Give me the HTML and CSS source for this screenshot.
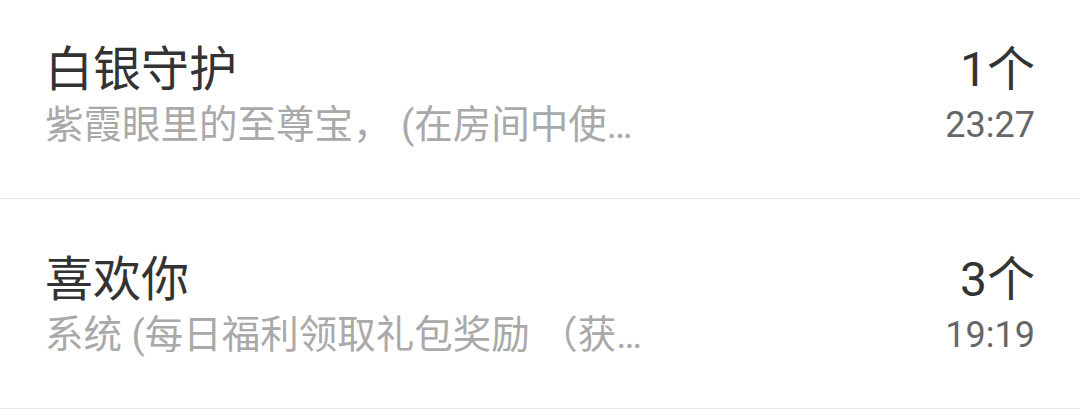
FILE: index.html
```html
<!DOCTYPE html>
<html lang="zh-CN">
<head>
<meta charset="utf-8">
<link rel="stylesheet" href="styles.css">
</head>
<body>
<div class="list">
  <div class="row">
    <div class="title">白银守护</div>
    <div class="count">1个</div>
    <div class="sub">紫霞眼里的至尊宝， (在房间中使用后获得白银守护特权)</div>
    <div class="time">23:27</div>
  </div>
  <div class="row">
    <div class="title">喜欢你</div>
    <div class="count">3个</div>
    <div class="sub">系统 (每日福利领取礼包奖励 （获得礼物）)</div>
    <div class="time">19:19</div>
  </div>
</div>
</body>
</html>
```
FILE: styles.css
```css
html, body {
  margin: 0;
  padding: 0;
  background: #ffffff;
}
body {
  font-family: Roboto, "Noto Sans CJK SC", sans-serif;
  width: 1080px;
  height: 409px;
  overflow: hidden;
}
.list {
  margin-top: -11px;
}
.row {
  box-sizing: border-box;
  height: 210px;
  border-bottom: 1px solid #e6e6e6;
  padding: 51px 45px 0 45px;
  display: grid;
  grid-template-columns: 1fr auto;
  grid-template-rows: 60px 50px;
  column-gap: 20px;
}
.title {
  font-size: 48px;
  line-height: 60px;
  color: #333333;
}
.count {
  font-size: 48px;
  line-height: 60px;
  color: #333333;
  text-align: right;
}
.sub {
  font-size: 38.5px;
  line-height: 50px;
  color: #a9a9a9;
  max-width: 615px;
  white-space: nowrap;
  overflow: hidden;
  text-overflow: ellipsis;
}
.time {
  font-size: 36px;
  line-height: 50px;
  color: #666666;
  text-align: right;
}
```
